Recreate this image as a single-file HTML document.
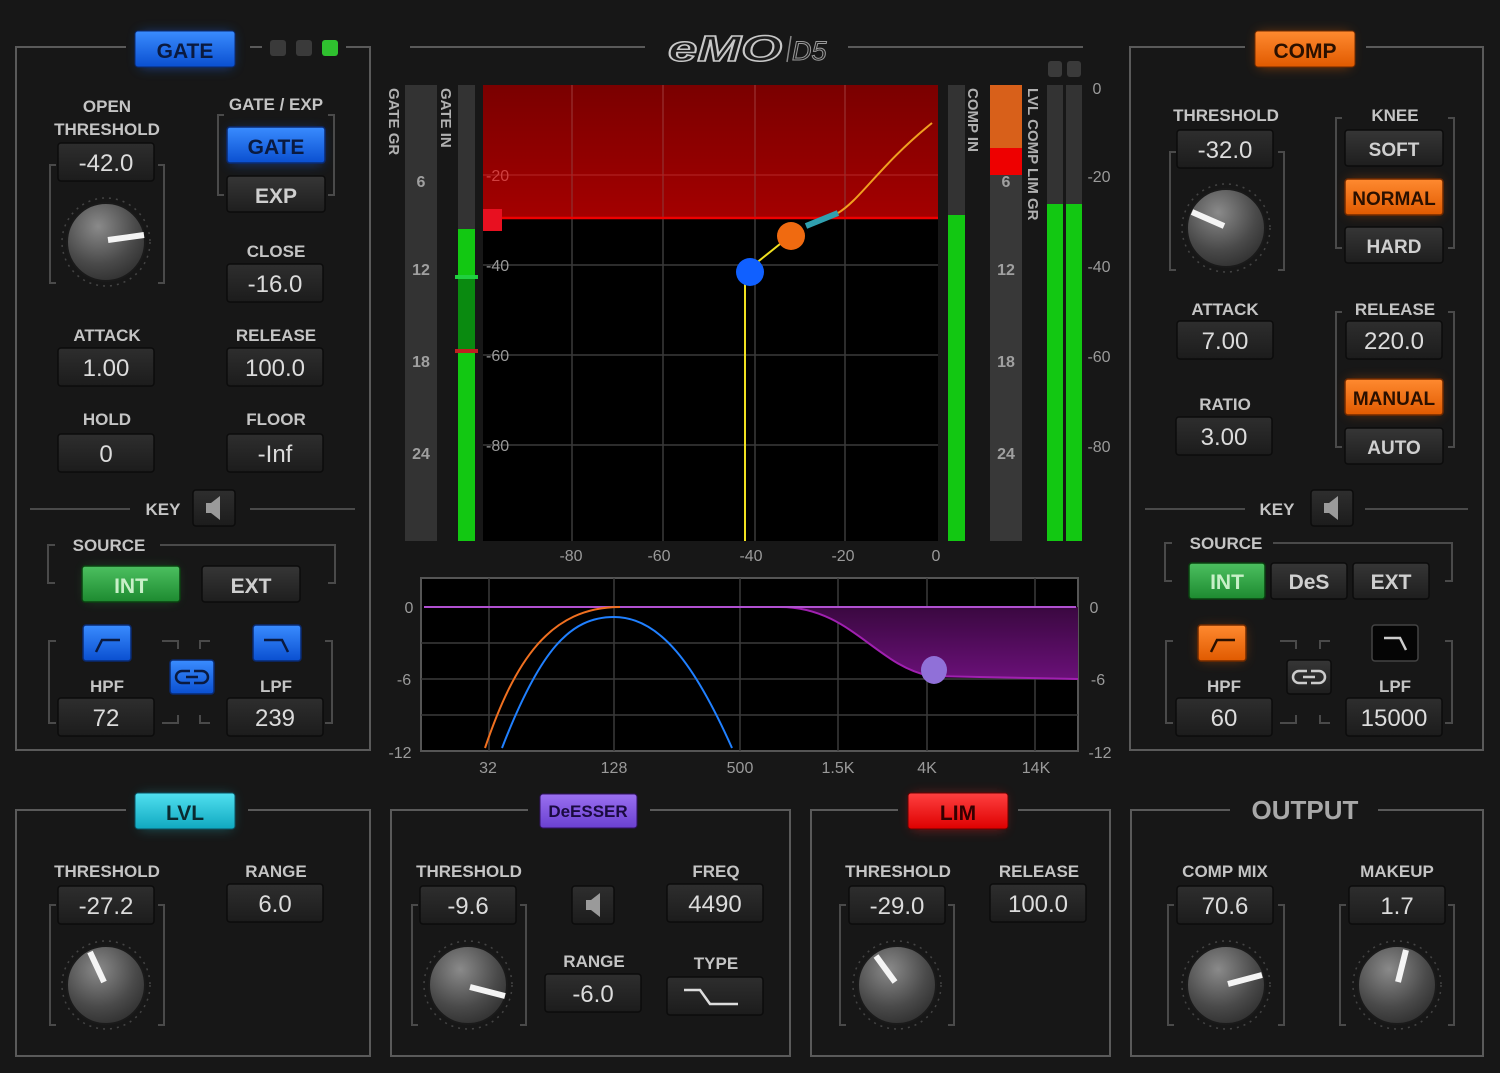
<!DOCTYPE html>
<html><head><meta charset="utf-8"><style>
html,body{margin:0;padding:0;background:#171717;}
svg{display:block}
text{font-family:"Liberation Sans",sans-serif}
.l{font-weight:bold;font-size:17px;fill:#c4c4c4;text-anchor:middle}
.v{font-size:24px;fill:#dcdcdc;text-anchor:middle}
.bt{font-weight:bold;font-size:21px;text-anchor:middle}
.sc{font-size:16px;fill:#9a9a9a;text-anchor:middle}
.fr{fill:none;stroke:#5a5a5a;stroke-width:2}
.br{fill:none;stroke:#4a4a4a;stroke-width:2}
</style></head><body>
<svg width="1500" height="1073" viewBox="0 0 1500 1073" xmlns="http://www.w3.org/2000/svg">
<defs>
<linearGradient id="vb" x1="0" y1="0" x2="0" y2="1"><stop offset="0" stop-color="#2e2e2e"/><stop offset="1" stop-color="#1c1c1c"/></linearGradient>
<linearGradient id="db" x1="0" y1="0" x2="0" y2="1"><stop offset="0" stop-color="#363636"/><stop offset="1" stop-color="#1e1e1e"/></linearGradient>
<linearGradient id="blue" x1="0" y1="0" x2="0" y2="1"><stop offset="0" stop-color="#3a8cff"/><stop offset="1" stop-color="#0a4fd0"/></linearGradient>
<linearGradient id="org" x1="0" y1="0" x2="0" y2="1"><stop offset="0" stop-color="#ff8a30"/><stop offset="1" stop-color="#e05a00"/></linearGradient>
<linearGradient id="grn" x1="0" y1="0" x2="0" y2="1"><stop offset="0" stop-color="#4cc060"/><stop offset="1" stop-color="#1d8a30"/></linearGradient>
<linearGradient id="cyn" x1="0" y1="0" x2="0" y2="1"><stop offset="0" stop-color="#50e0f0"/><stop offset="1" stop-color="#10a8c0"/></linearGradient>
<linearGradient id="pur" x1="0" y1="0" x2="0" y2="1"><stop offset="0" stop-color="#9a70f0"/><stop offset="1" stop-color="#6a40d0"/></linearGradient>
<linearGradient id="red" x1="0" y1="0" x2="0" y2="1"><stop offset="0" stop-color="#ff4040"/><stop offset="1" stop-color="#d00"/></linearGradient>
<linearGradient id="rz" x1="0" y1="0" x2="0" y2="1"><stop offset="0" stop-color="#7a0000"/><stop offset="1" stop-color="#a40000"/></linearGradient>
<linearGradient id="pf" x1="0" y1="0" x2="0" y2="1"><stop offset="0" stop-color="#3a0840"/><stop offset="1" stop-color="#6a1078"/></linearGradient>
<radialGradient id="kn" cx="0.4" cy="0.3" r="0.8"><stop offset="0" stop-color="#8a8a8a"/><stop offset="0.6" stop-color="#4a4a4a"/><stop offset="1" stop-color="#2a2a2a"/></radialGradient>
<filter id="gl" x="-50%" y="-50%" width="200%" height="200%"><feGaussianBlur stdDeviation="6"/></filter>
</defs>

<rect x="0" y="0" width="1500" height="1073" fill="#171717"/>
<path class="fr" d="M126 47H16V750H370V47H346 M250 47H262"/>
<path class="fr" d="M1245 47H1130V750H1483V47H1366"/>
<path class="fr" d="M410 47H645 M848 47H1083"/>
<path class="fr" d="M126 810H16V1056H370V810H248"/>
<path class="fr" d="M528 810H391V1056H790V810H650"/>
<path class="fr" d="M898 810H811V1056H1110V810H1018"/>
<path class="fr" d="M1230 810H1131V1056H1483V810H1378"/>

<text x="668" y="61" font-size="36" font-weight="bold" font-style="italic" fill="#1e1e1e" stroke="#c8c8c8" stroke-width="1.5" textLength="114" lengthAdjust="spacingAndGlyphs">eMO</text>
<line x1="791" y1="36" x2="787" y2="62" stroke="#888" stroke-width="1.5"/>
<text x="792" y="60" font-size="27" font-style="italic" fill="#1e1e1e" stroke="#9a9a9a" stroke-width="1">D5</text>

<rect x="140" y="33" width="92" height="34" fill="#1a6cff" opacity="0.5" filter="url(#gl)"/>
<rect x="230" y="130" width="92" height="34" fill="#1a6cff" opacity="0.4" filter="url(#gl)"/>
<rect x="1258" y="33" width="92" height="34" fill="#ff6a00" opacity="0.45" filter="url(#gl)"/>
<rect x="140" y="795" width="92" height="34" fill="#20d0e0" opacity="0.35" filter="url(#gl)"/>
<rect x="912" y="795" width="92" height="34" fill="#ff2020" opacity="0.45" filter="url(#gl)"/>
<rect x="1348" y="180" width="92" height="34" fill="#ff6a00" opacity="0.35" filter="url(#gl)"/>
<rect x="1348" y="380" width="92" height="34" fill="#ff6a00" opacity="0.35" filter="url(#gl)"/>
<rect x="1200" y="628" width="44" height="32" fill="#ff6a00" opacity="0.4" filter="url(#gl)"/>
<rect x="86" y="568" width="90" height="32" fill="#30c050" opacity="0.3" filter="url(#gl)"/>

<rect x="135" y="31" width="100" height="36" rx="3" fill="url(#blue)" stroke="#0a2a70"/><text class="bt" x="185" y="58" fill="#0a1a40">GATE</text>
<rect x="270" y="40" width="16" height="16" rx="3" fill="#3a3a3a"/><rect x="296" y="40" width="16" height="16" rx="3" fill="#3a3a3a"/><rect x="322" y="40" width="16" height="16" rx="3" fill="#2fc02f"/>
<rect x="1255" y="31" width="100" height="36" rx="3" fill="url(#org)" stroke="#702a00"/><text class="bt" x="1305" y="58" fill="#2a1000">COMP</text>
<rect x="135" y="793" width="100" height="36" rx="3" fill="url(#cyn)" stroke="#0a5060"/><text class="bt" x="185" y="820" fill="#0a2a30">LVL</text>
<rect x="540" y="794" width="97" height="34" rx="3" fill="url(#pur)" stroke="#301060"/><text class="bt" x="588" y="817" style="font-size:17px" fill="#1a0a40">DeESSER</text>
<rect x="908" y="793" width="100" height="36" rx="3" fill="url(#red)" stroke="#600"/><text class="bt" x="958" y="820" fill="#300">LIM</text>
<text x="1305" y="819" font-size="26" font-weight="bold" fill="#a8a8a8" text-anchor="middle">OUTPUT</text>

<g class="l">
<text x="107" y="112">OPEN</text><text x="107" y="135">THRESHOLD</text><text x="276" y="110">GATE / EXP</text>
<text x="276" y="257">CLOSE</text><text x="107" y="341">ATTACK</text><text x="276" y="341">RELEASE</text>
<text x="107" y="425">HOLD</text><text x="276" y="425">FLOOR</text><text x="163" y="515">KEY</text>
<text x="109" y="551">SOURCE</text><text x="107" y="692">HPF</text><text x="276" y="692">LPF</text>
<text x="1226" y="121">THRESHOLD</text><text x="1395" y="121">KNEE</text><text x="1225" y="315">ATTACK</text>
<text x="1395" y="315">RELEASE</text><text x="1225" y="410">RATIO</text><text x="1277" y="515">KEY</text>
<text x="1226" y="549">SOURCE</text><text x="1224" y="692">HPF</text><text x="1395" y="692">LPF</text>
<text x="107" y="877">THRESHOLD</text><text x="276" y="877">RANGE</text><text x="469" y="877">THRESHOLD</text>
<text x="716" y="877">FREQ</text><text x="594" y="967">RANGE</text><text x="716" y="969">TYPE</text>
<text x="898" y="877">THRESHOLD</text><text x="1039" y="877">RELEASE</text><text x="1225" y="877">COMP MIX</text><text x="1397" y="877">MAKEUP</text>
</g>

<g class="br">
<path d="M56 165h-6v118h6 M158 165h6v118h-6"/>
<path d="M224 115h-6v80h6 M328 115h6v80h-6"/>
<path d="M1176 152h-6v118h6 M1278 152h6v118h-6"/>
<path d="M1342 118h-6v130h6 M1448 118h6v130h-6"/>
<path d="M1342 312h-6v135h6 M1448 312h6v135h-6"/>
<path d="M55 545h-7v38h7 M160 545H335v38h-7"/>
<path d="M1172 543h-7v38h7 M1273 543H1452v38h-7"/>
<path d="M56 641h-7v82h7 M162 641h16v8 M162 723h16v-8 M210 641h-10v8 M210 723h-10v-8 M325 641h7v82h-7"/>
<path d="M1173 641h-7v82h7 M1280 641h16v8 M1280 723h16v-8 M1330 641h-10v8 M1330 723h-10v-8 M1445 641h7v82h-7"/>
<path d="M30 509H130 M250 509H355 M1145 509H1245 M1365 509H1468"/>
<path d="M56 905h-6v120h6 M158 905h6v120h-6"/>
<path d="M418 905h-6v120h6 M520 905h6v120h-6"/>
<path d="M846 905h-6v120h6 M948 905h6v120h-6"/>
<path d="M1174 905h-6v120h6 M1278 905h6v120h-6"/>
<path d="M1346 905h-6v120h6 M1448 905h6v120h-6"/>
</g>

<g>
<g fill="url(#vb)" stroke="#0c0c0c" stroke-width="1.5">
<rect x="58" y="143" width="96" height="38" rx="3"/><rect x="227" y="264" width="96" height="38" rx="3"/>
<rect x="58" y="348" width="96" height="38" rx="3"/><rect x="227" y="348" width="96" height="38" rx="3"/>
<rect x="58" y="434" width="96" height="38" rx="3"/><rect x="227" y="434" width="96" height="38" rx="3"/>
<rect x="58" y="698" width="96" height="38" rx="3"/><rect x="227" y="698" width="96" height="38" rx="3"/>
<rect x="1177" y="130" width="96" height="38" rx="3"/><rect x="1346" y="321" width="96" height="38" rx="3"/>
<rect x="1177" y="321" width="96" height="38" rx="3"/><rect x="1176" y="417" width="96" height="38" rx="3"/>
<rect x="1176" y="698" width="96" height="38" rx="3"/><rect x="1346" y="698" width="96" height="38" rx="3"/>
<rect x="58" y="886" width="96" height="38" rx="3"/><rect x="227" y="884" width="96" height="38" rx="3"/>
<rect x="420" y="886" width="96" height="38" rx="3"/><rect x="667" y="884" width="96" height="38" rx="3"/>
<rect x="545" y="974" width="96" height="38" rx="3"/><rect x="667" y="977" width="96" height="38" rx="3"/>
<rect x="849" y="886" width="96" height="38" rx="3"/><rect x="990" y="884" width="96" height="38" rx="3"/>
<rect x="1177" y="886" width="96" height="38" rx="3"/><rect x="1349" y="886" width="96" height="38" rx="3"/>
<rect x="572" y="886" width="42" height="38" rx="3"/><rect x="193" y="490" width="42" height="36" rx="3"/><rect x="1311" y="490" width="42" height="36" rx="3"/>
</g>
<g class="v">
<text x="106" y="171">-42.0</text><text x="275" y="292">-16.0</text><text x="106" y="376">1.00</text><text x="275" y="376">100.0</text>
<text x="106" y="462">0</text><text x="275" y="462">-Inf</text><text x="106" y="726">72</text><text x="275" y="726">239</text>
<text x="1225" y="158">-32.0</text><text x="1394" y="349">220.0</text><text x="1225" y="349">7.00</text><text x="1224" y="445">3.00</text>
<text x="1224" y="726">60</text><text x="1394" y="726">15000</text>
<text x="106" y="914">-27.2</text><text x="275" y="912">6.0</text><text x="468" y="914">-9.6</text><text x="715" y="912">4490</text>
<text x="593" y="1002">-6.0</text><text x="897" y="914">-29.0</text><text x="1038" y="912">100.0</text><text x="1225" y="914">70.6</text><text x="1397" y="914">1.7</text>
</g>
<path d="M684 990h16l10 14h28" fill="none" stroke="#ddd" stroke-width="2.5"/>
<g fill="#9a9a9a"><path d="M586 900h5l9-7v24l-9-7h-5z"/><path d="M206 503h5l9-7v24l-9-7h-5z"/><path d="M1324 503h5l9-7v24l-9-7h-5z"/></g>
</g>

<g stroke="#0c0c0c" stroke-width="1.5">
<rect x="227" y="127" width="98" height="36" rx="3" fill="url(#blue)" stroke="#0a2a70"/>
<rect x="227" y="176" width="98" height="36" rx="3" fill="url(#db)"/>
<rect x="82" y="566" width="98" height="36" rx="3" fill="url(#grn)" stroke="#0a4010"/>
<rect x="202" y="566" width="98" height="36" rx="3" fill="url(#db)"/>
<rect x="1345" y="130" width="98" height="36" rx="3" fill="url(#db)"/>
<rect x="1345" y="179" width="98" height="36" rx="3" fill="url(#org)" stroke="#702a00"/>
<rect x="1345" y="227" width="98" height="36" rx="3" fill="url(#db)"/>
<rect x="1345" y="379" width="98" height="36" rx="3" fill="url(#org)" stroke="#702a00"/>
<rect x="1345" y="428" width="98" height="36" rx="3" fill="url(#db)"/>
<rect x="1189" y="563" width="76" height="36" rx="3" fill="url(#grn)" stroke="#0a4010"/>
<rect x="1271" y="563" width="76" height="36" rx="3" fill="url(#db)"/>
<rect x="1353" y="563" width="76" height="36" rx="3" fill="url(#db)"/>
<rect x="83" y="625" width="48" height="36" rx="3" fill="url(#blue)" stroke="#0a2a70"/>
<rect x="253" y="625" width="48" height="36" rx="3" fill="url(#blue)" stroke="#0a2a70"/>
<rect x="170" y="660" width="44" height="34" rx="3" fill="url(#blue)" stroke="#0a2a70"/>
<rect x="1198" y="625" width="48" height="36" rx="3" fill="url(#org)" stroke="#702a00"/>
<rect x="1287" y="660" width="44" height="34" rx="3" fill="url(#db)"/>
<rect x="1372" y="625" width="46" height="36" rx="3" fill="#050505" stroke="#444"/>
</g>
<g class="bt">
<text x="276" y="154" fill="#0a1a40">GATE</text><text x="276" y="203" fill="#cfcfcf">EXP</text>
<text x="131" y="593" fill="#c8f0c8">INT</text><text x="251" y="593" fill="#cfcfcf">EXT</text>
<text x="1394" y="156" fill="#cfcfcf" style="font-size:19px">SOFT</text><text x="1394" y="205" fill="#2a1000" style="font-size:19px">NORMAL</text>
<text x="1394" y="253" fill="#cfcfcf" style="font-size:19px">HARD</text><text x="1394" y="405" fill="#2a1000" style="font-size:19px">MANUAL</text>
<text x="1394" y="454" fill="#cfcfcf" style="font-size:19px">AUTO</text>
<text x="1227" y="589" fill="#c8f0c8">INT</text><text x="1309" y="589" fill="#cfcfcf">DeS</text><text x="1391" y="589" fill="#cfcfcf">EXT</text>
</g>
<g fill="none" stroke-width="2.5">
<path d="M96 652l6-12h18" stroke="#0a1a40"/><path d="M264 640h18l6 12" stroke="#0a1a40"/>
<path d="M1211 652l6-12h18" stroke="#2a1000"/><path d="M1384 638h16l6 12" stroke="#ccc"/>
<path d="M190 671h-8a6 6 0 0 0 0 12h8 M194 683h8a6 6 0 0 0 0-12h-8 M186 677h12" stroke="#0a1a40"/>
<path d="M1307 671h-8a6 6 0 0 0 0 12h8 M1311 683h8a6 6 0 0 0 0-12h-8 M1303 677h12" stroke="#ccc"/>
</g>

<g stroke-width="1.5" fill="none" stroke-dasharray="2 5" stroke="#444">
<circle cx="106" cy="242" r="44"/><circle cx="1226" cy="228" r="44"/><circle cx="106" cy="985" r="44"/>
<circle cx="468" cy="985" r="44"/><circle cx="897" cy="985" r="44"/><circle cx="1226" cy="985" r="44"/><circle cx="1397" cy="985" r="44"/>
</g>
<g fill="url(#kn)" stroke="#1a1a1a" stroke-width="2">
<circle cx="106" cy="242" r="39"/><circle cx="1226" cy="228" r="39"/><circle cx="106" cy="985" r="39"/>
<circle cx="468" cy="985" r="39"/><circle cx="897" cy="985" r="39"/><circle cx="1226" cy="985" r="39"/><circle cx="1397" cy="985" r="39"/>
</g>
<g stroke="#f4f4f4" stroke-width="6">
<path d="M108 240L144 235"/><path d="M1224 226L1192 212"/><path d="M104 982L90 952"/>
<path d="M470 987L505 996"/><path d="M895 982L876 956"/><path d="M1228 984L1262 975"/><path d="M1398 982L1406 950"/>
</g>

<text transform="translate(389,88) rotate(90)" font-size="15" font-weight="bold" fill="#b0b0b0">GATE GR</text>
<text transform="translate(441,88) rotate(90)" font-size="15" font-weight="bold" fill="#b0b0b0">GATE IN</text>
<text transform="translate(968,88) rotate(90)" font-size="15" font-weight="bold" fill="#b0b0b0">COMP IN</text>
<text transform="translate(1028,88) rotate(90)" font-size="15" font-weight="bold" fill="#b0b0b0">LVL COMP LIM GR</text>
<rect x="405" y="85" width="32" height="456" fill="#333"/>
<rect x="458" y="85" width="17" height="456" fill="#333"/><rect x="458" y="229" width="17" height="312" fill="#12c812"/>
<rect x="458" y="275" width="17" height="75" fill="#0a8a10"/><rect x="455" y="275" width="23" height="4" fill="#20d040"/><rect x="455" y="349" width="23" height="4" fill="#c02020"/>
<rect x="948" y="85" width="17" height="456" fill="#333"/><rect x="948" y="215" width="17" height="326" fill="#12c812"/>
<rect x="990" y="85" width="32" height="456" fill="#383838"/><rect x="990" y="85" width="32" height="63" fill="#d8601a"/><rect x="990" y="148" width="32" height="27" fill="#e00"/>
<rect x="1047" y="85" width="16" height="456" fill="#333"/><rect x="1066" y="85" width="16" height="456" fill="#333"/>
<rect x="1047" y="204" width="16" height="337" fill="#12c812"/><rect x="1066" y="204" width="16" height="337" fill="#12c812"/>
<rect x="1048" y="61" width="14" height="16" rx="3" fill="#3a3a3a"/><rect x="1067" y="61" width="14" height="16" rx="3" fill="#3a3a3a"/>
<g font-size="16" font-weight="bold" fill="#a0a0a0" text-anchor="middle">
<text x="421" y="187">6</text><text x="421" y="275">12</text><text x="421" y="367">18</text><text x="421" y="459">24</text>
<text x="1006" y="187">6</text><text x="1006" y="275">12</text><text x="1006" y="367">18</text><text x="1006" y="459">24</text>
</g>
<g class="sc"><text x="1097" y="94">0</text><text x="1099" y="182">-20</text><text x="1099" y="272">-40</text><text x="1099" y="362">-60</text><text x="1099" y="452">-80</text>
<text x="571" y="561">-80</text><text x="659" y="561">-60</text><text x="751" y="561">-40</text><text x="843" y="561">-20</text><text x="936" y="561">0</text></g>

<rect x="483" y="85" width="455" height="456" fill="#000"/>
<rect x="483" y="85" width="455" height="133" fill="url(#rz)"/>
<g stroke="#3a3a3a" stroke-width="1.5"><path d="M572 85V541M663 85V541M755 85V541M845 85V541M483 265H938M483 355H938M483 445H938"/>
</g><g stroke="#b02020" stroke-width="1.2"><path d="M572 85V218M663 85V218M755 85V218M845 85V218M483 175H938"/></g>
<line x1="483" y1="218" x2="938" y2="218" stroke="#e00" stroke-width="2.5"/>
<rect x="483" y="209" width="19" height="22" fill="#e81020"/>
<g font-size="16" fill="#999"><text x="486" y="181" fill="#d04040">-20</text><text x="486" y="271">-40</text><text x="486" y="361">-60</text><text x="486" y="451">-80</text></g>
<path d="M745 541V272L790 236" stroke="#f0e020" stroke-width="2" fill="none"/>
<path d="M806 226L838 213" stroke="#30a0b0" stroke-width="6"/>
<path d="M838 213C860 200 880 165 932 123" stroke="#f0a020" stroke-width="2" fill="none"/>
<circle cx="750" cy="272" r="14" fill="#1060ff"/><circle cx="791" cy="236" r="14" fill="#f06a10"/>

<rect x="421" y="578" width="657" height="173" fill="#000" stroke="#555" stroke-width="2"/>
<g stroke="#3a3a3a" stroke-width="1.5"><path d="M489 578V751M614 578V751M740 578V751M838 578V751M927 578V751M1035 578V751M421 643H1078M421 679H1078M421 715H1078"/></g>
<path d="M780 607C850 607 875 665 930 676L1078 679V607Z" fill="url(#pf)"/>
<path d="M780 607C850 607 875 665 930 676L1078 679" fill="none" stroke="#a020b0" stroke-width="2"/>
<line x1="424" y1="607" x2="1076" y2="607" stroke="#b050d0" stroke-width="2"/>
<path d="M485 748C515 660 550 607 620 607" stroke="#f07020" stroke-width="2" fill="none"/>
<path d="M502 748C540 650 570 617 614 617C660 617 695 665 732 748" stroke="#2080ff" stroke-width="2" fill="none"/>
<ellipse cx="934" cy="670" rx="13" ry="14" fill="#9070d8"/>
<g class="sc"><text x="409" y="613">0</text><text x="404" y="685">-6</text><text x="400" y="758">-12</text>
<text x="1094" y="613">0</text><text x="1098" y="685">-6</text><text x="1100" y="758">-12</text>
<text x="488" y="773">32</text><text x="614" y="773">128</text><text x="740" y="773">500</text><text x="838" y="773">1.5K</text><text x="927" y="773">4K</text><text x="1036" y="773">14K</text></g>
</svg>
</body></html>
